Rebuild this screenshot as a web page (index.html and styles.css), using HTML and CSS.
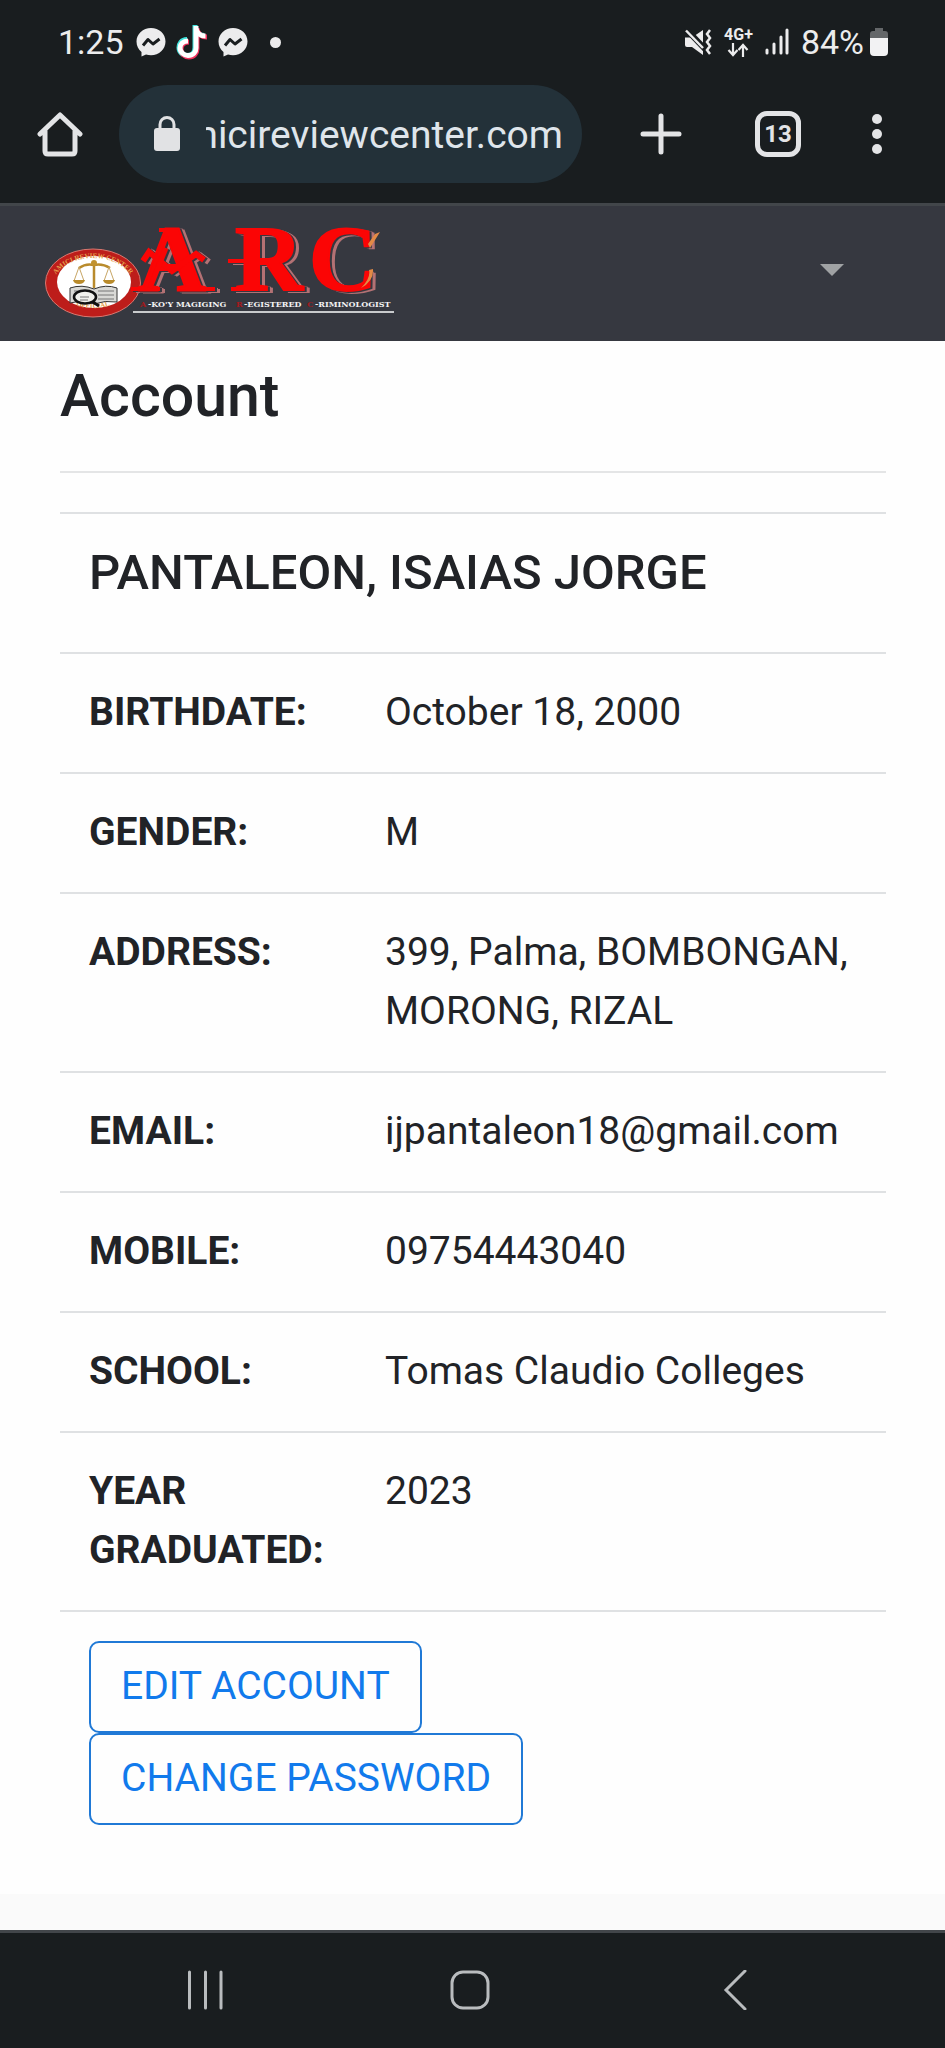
FILE: index.html
```html
<!DOCTYPE html>
<html lang="en">
<head>
<meta charset="utf-8">
<meta name="viewport" content="width=device-width, initial-scale=1">
<title>Account</title>
<link rel="stylesheet" href="styles.css">
</head>
<body>
<div class="status">
  <span class="status-text">1:25</span>
  <div class="status-apps">
    <svg width="30" height="30" viewBox="0 0 30 30" aria-hidden="true"><path fill="#ececed" d="M15 1C7 1 .5 7 .5 14.500c0 4.500 2 8 5 10.500v4.500l4.500-2c1.500.5 3.300.8 5 .8 8 0 14.500-6 14.500-13.800S23 1 15 1z"/><path fill="none" stroke="#191d1f" stroke-width="3" stroke-linejoin="round" d="M7 18.500l5-6 5 4.500 6.500-5"/></svg>
    <svg width="32" height="36" viewBox="0 0 32 36" aria-hidden="true">
      <g fill="none" stroke-width="5"><path stroke="#3fe3dc" d="M11 15.500C5 15.500 3 20 3 23.500c0 5 4 8 8 8 5 0 8-3.500 8-8V1M19 3c0 5 3.500 8 9 8.500"/><path stroke="#f0335f" d="M13 18C8 18 5 21 5 25c0 5 4 8 8 8 5 0 8-4 8-8V4M21 5c1 5 4 8 10 8"/><path stroke="#fff" d="M12 17c-5 0-8 3-8 7s4 7.500 8 7.500c5 0 8-3.500 8-7.500V2M20 4c.5 5 4 8 9.500 8"/></g>
    </svg>
    <svg width="30" height="30" viewBox="0 0 30 30" aria-hidden="true"><path fill="#ececed" d="M15 1C7 1 .5 7 .5 14.500c0 4.500 2 8 5 10.500v4.500l4.500-2c1.500.5 3.300.8 5 .8 8 0 14.500-6 14.500-13.800S23 1 15 1z"/><path fill="none" stroke="#191d1f" stroke-width="3" stroke-linejoin="round" d="M7 18.500l5-6 5 4.500 6.500-5"/></svg>
  </div>
  <span class="status-dot"></span>
  <div class="status-right">
    <svg width="28" height="28" viewBox="0 0 28 28" aria-hidden="true"><path fill="#ececed" d="M1 9.500h7L19 2v25L8 19H3q-2 0-2-2z"/><path d="M1 0l20 21" stroke="#191d1f" stroke-width="6"/><path d="M2 2.500L19 20" stroke="#ececed" stroke-width="2.500"/><path fill="none" stroke="#ececed" stroke-width="2.500" d="M26 2l-3 4 3 4-3 4 3 4-3 4 3 4"/></svg>
    <div class="network"><span>4G+</span>
      <svg width="22" height="14" viewBox="0 0 22 14" aria-hidden="true"><path fill="none" stroke="#ececed" stroke-width="2.200" d="M6 0v11M1.500 7L6 12l4.500-5M16 14V3M11.500 7L16 2l4.500 5"/></svg>
    </div>
    <svg width="24" height="28" viewBox="0 0 24 28" aria-hidden="true"><path stroke="#ececed" stroke-width="3" stroke-linecap="round" d="M2 22v3M9 16v9M16 9v16M22 2v23"/></svg>
    <span class="status-text">84%</span>
    <svg width="18" height="28" viewBox="0 0 18 28" aria-hidden="true"><path fill="#646769" d="M5 0h8v3h2q3 0 3 3v5H0V6q0-3 3-3h2z"/><path fill="#f2f2f3" d="M0 10h18v14q0 4-4 4H4q-4 0-4-4z"/></svg>
  </div>
</div>
<div class="toolbar">
  <button class="icon-btn" aria-label="Home"><svg width="46" height="46" viewBox="0 0 46 46"><path fill="none" stroke="#e3e4e6" stroke-width="5" stroke-linecap="round" stroke-linejoin="round" d="M3 23L23 4l20 19M8 20v20q0 3 3 3h24q3 0 3-3V20"/></svg></button>
  <div class="address">
    <svg width="28" height="36" viewBox="0 0 28 36" aria-hidden="true"><rect x="1" y="12" width="26" height="23" rx="3" fill="#e1e2e4"/><path d="M7 13V8.500a7 7 0 0 1 14 0V13" fill="none" stroke="#e1e2e4" stroke-width="3"/></svg>
    <div class="url"><span>amicireviewcenter.com</span></div>
  </div>
  <div class="actions">
    <button class="icon-btn" aria-label="New tab"><svg width="46" height="46" viewBox="0 0 46 46"><path d="M23 5v36M5 23h36" stroke="#e3e4e6" stroke-width="5" stroke-linecap="round"/></svg></button>
    <button class="icon-btn tabs" aria-label="13 open tabs">13</button>
    <button class="icon-btn" aria-label="More options"><svg width="10" height="42" viewBox="0 0 10 42"><g fill="#e3e4e6"><circle cx="5" cy="6" r="5"/><circle cx="5" cy="21" r="5"/><circle cx="5" cy="36" r="5"/></g></svg></button>
  </div>
</div>
<header class="site-header">
  <a class="brand" href="#" aria-label="ARC home">
    <svg class="logo" width="352" height="90" viewBox="44 225 352 90">
      <defs>
        <path id="ring-top" d="M52 287A41 29 0 0 1 134 287"/>
        <path id="ring-bottom" d="M58 294A42 31.500 0 0 0 128 294"/>
      </defs>
      <ellipse cx="93" cy="283" rx="47.500" ry="34" fill="#bd1d1a" stroke="#d87870"/>
      <ellipse cx="94" cy="282" rx="37" ry="26" fill="#fff"/>
      <text class="ring" text-anchor="middle"><textPath href="#ring-top" startOffset="50%">AMICI REVIEW CENTER</textPath></text>
      <text class="ring" text-anchor="middle"><textPath href="#ring-bottom" startOffset="50%">OFFICIAL</textPath></text>
      <path d="M70 288q12-4 24 1q12-5 23-1v14q-12-2-23 2q-12-4-24-1z" fill="#d9d9d6" stroke="#333"/>
      <path d="M98 291h16M98 295h16M98 299h16M74 291h13" stroke="#777"/>
      <ellipse cx="85" cy="297" rx="11" ry="6.500" fill="#f1f1ed" stroke="#111" stroke-width="2.500"/>
      <path d="M93 302l6 4" stroke="#111" stroke-width="3"/>
      <path d="M80 297h9M80 300h8" stroke="#777"/>
      <path d="M94 261v27M79 268q7-5 15-3q8-2 16 3" fill="none" stroke="#b98b2c" stroke-width="2.500"/>
      <circle cx="94" cy="263" r="3" fill="#c1922f"/>
      <path d="M79 267l-5 14M79 267l5 14M109 267l-5 14M109 267l5 14" stroke="#c8a665"/>
      <path d="M73 280h12q-1 4-6 4t-6-4M103 280h12q-1 4-6 4t-6-4" fill="#b98b2c"/>
      <g class="wordmark">
        <g class="letters"><text x="138" y="290">A</text><text x="235" y="290">R</text><text x="309" y="290">C</text></g>
        <path d="M143 261l6-9 23 19 24-17 8 6" fill="none" stroke="#fb0505" stroke-width="6"/>
        <path d="M159 230h16M228 261h26M131 289h29M186 289h29M231 289h32" stroke="#fb0505" stroke-width="4"/>
        <path d="M150 288l16-40" stroke="#fb0505" stroke-width="5"/>
      </g>
      <path d="M368 244l7-10 5-2-10 16zM373 269q1 12-12 19q10-10 8-18z" fill="#e38a45"/>
      <g class="motto"><text x="148" y="307">-KO'Y MAGIGING</text><text x="244" y="307">-EGISTERED</text><text x="315" y="307">-RIMINOLOGIST</text></g>
      <g class="motto motto-red"><text x="140" y="307">A</text><text x="236" y="307">R</text><text x="307" y="307">C</text></g>
      <path d="M133 312h261" stroke="#c9cbcd" stroke-width="2"/>
    </svg>
  </a>
  <button class="icon-btn" aria-label="Open menu"><svg width="24" height="12" viewBox="0 0 24 12"><path d="M0 0h24L12 12z" fill="#a0a2a4"/></svg></button>
</header>
<main class="content">
  <h1>Account</h1>
  <hr>
  <table class="details">
    <colgroup><col class="col-label"><col></colgroup>
    <tbody>
      <tr><td colspan="2"><h2>PANTALEON, ISAIAS JORGE</h2></td></tr>
      <tr><th scope="row">BIRTHDATE:</th><td>October 18, 2000</td></tr>
      <tr><th scope="row">GENDER:</th><td>M</td></tr>
      <tr><th scope="row">ADDRESS:</th><td>399, Palma, BOMBONGAN, MORONG, RIZAL</td></tr>
      <tr><th scope="row">EMAIL:</th><td>ijpantaleon18@gmail.com</td></tr>
      <tr><th scope="row">MOBILE:</th><td>09754443040</td></tr>
      <tr><th scope="row">SCHOOL:</th><td>Tomas Claudio Colleges</td></tr>
      <tr><th scope="row">YEAR GRADUATED:</th><td>2023</td></tr>
      <tr><td colspan="2"><div class="buttons"><button class="btn">EDIT ACCOUNT</button><button class="btn">CHANGE PASSWORD</button></div></td></tr>
    </tbody>
  </table>
</main>
<nav class="system-nav" aria-label="System">
  <button class="icon-btn" aria-label="Recent apps"><svg width="40" height="40" viewBox="0 0 40 40"><path d="M4.500 2v36M20.500 2v36M36 2v36" stroke="#b9bcbe" stroke-width="3" stroke-linecap="round"/></svg></button>
  <button class="icon-btn" aria-label="Home screen"><svg width="40" height="40" viewBox="0 0 40 40"><rect x="2" y="2" width="36" height="36" rx="11" fill="none" stroke="#b9bcbe" stroke-width="3"/></svg></button>
  <button class="icon-btn" aria-label="Back"><svg width="40" height="40" viewBox="0 0 40 40"><path d="M30 1L11 20l19 19" fill="none" stroke="#b9bcbe" stroke-width="3" stroke-linecap="round"/></svg></button>
</nav>
</body>
</html>
```
FILE: styles.css
```css
* { box-sizing: border-box; }
body {
  margin: 0;
  min-height: 100vh;
  display: flex;
  flex-direction: column;
  background: #fafafa;
  color: #212327;
  font-family: Roboto, "Noto Sans", sans-serif;
  font-size: 39px;
  line-height: 59px;
}
svg { display: block; flex: none; }
.icon-btn {
  display: flex;
  align-items: center;
  justify-content: center;
  padding: 0;
  border: 0;
  background: none;
  color: #e3e4e6;
  font: inherit;
}

.status {
  display: flex;
  align-items: center;
  height: 84px;
  padding: 0 57px 0 58px;
  background: #191d1f;
  color: #ececed;
}
.status-text { font-size: 34px; line-height: 40px; }
.status-apps { display: flex; align-items: center; gap: 10px; margin-left: 12px; }
.status-dot { width: 11px; height: 11px; margin-left: 22px; border-radius: 50%; background: #ececed; }
.status-right { display: flex; align-items: center; gap: 12px; margin-left: auto; }
.status-right .status-text { margin-right: -6px; }
.network {
  display: flex;
  flex-direction: column;
  align-items: center;
  font-size: 16px;
  font-weight: 700;
  line-height: 16px;
}

.toolbar {
  display: flex;
  align-items: center;
  padding: 1px 63px 20px 37px;
  background: #191d1f;
}
.address {
  flex: 1;
  min-width: 0;
  display: flex;
  align-items: center;
  gap: 25px;
  height: 98px;
  margin: 0 56px 0 36px;
  padding: 0 19px 0 34px;
  border-radius: 49px;
  background: #233139;
  color: #dfe5eb;
}
.url {
  flex: 1;
  min-width: 0;
  display: flex;
  justify-content: flex-end;
  padding-top: 3px;
  overflow: hidden;
  white-space: nowrap;
}
.actions { display: flex; align-items: center; gap: 71px; }
.tabs {
  width: 46px;
  height: 46px;
  border: 5px solid #e3e4e6;
  border-radius: 12px;
  font-size: 24px;
  font-weight: 700;
  line-height: 36px;
}

.site-header {
  display: flex;
  align-items: center;
  justify-content: space-between;
  padding: 19px 101px 26px 44px;
  border-top: 3px solid #42464a;
  background: #363840;
}
.logo { overflow: visible; }
.wordmark { filter: drop-shadow(2px 1px 0 #363840) drop-shadow(3px 1px 0 #b47174); }
.letters { font: 700 94px "Liberation Serif", serif; fill: #fb0505; stroke: #fb0505; stroke-width: 2px; }
.motto { font: 700 8px "DejaVu Serif", serif; fill: #f2f2f2; }
.motto-red { fill: #a3181c; }
.ring { font: 700 7px "Liberation Serif", serif; fill: #e5a14c; }

.content { padding: 19px 59px 69px 60px; background: #fefefe; }
h1 { margin: 0; font-size: 59px; font-weight: 500; line-height: 72px; }
hr { height: 2px; margin: 39px 0; border: 0; background: #e4e5e6; }
.details { width: 100%; border-collapse: separate; border-spacing: 0; table-layout: fixed; }
.col-label { width: 296px; }
.details th, .details td {
  padding: 29px 20px 30px 29px;
  border-top: 2px solid #dfe1e3;
  text-align: left;
  vertical-align: top;
}
.details th { font-weight: 700; }
.details tr:last-child td { padding-bottom: 0; }
h2 { margin: 0 0 20px; font-size: 49px; font-weight: 500; line-height: 59px; }
.buttons { display: flex; flex-direction: column; align-items: flex-start; }
.btn {
  padding: 14px 30px 15px;
  border: 2px solid #2079d6;
  border-radius: 10px;
  background: none;
  color: #117aec;
  font: inherit;
}

.system-nav {
  display: grid;
  grid-template-columns: repeat(3, 1fr);
  align-items: center;
  height: 118px;
  margin-top: auto;
  padding: 0 78px 2px 72px;
  border-top: 3px solid #42464a;
  background: #191d1f;
}
```
